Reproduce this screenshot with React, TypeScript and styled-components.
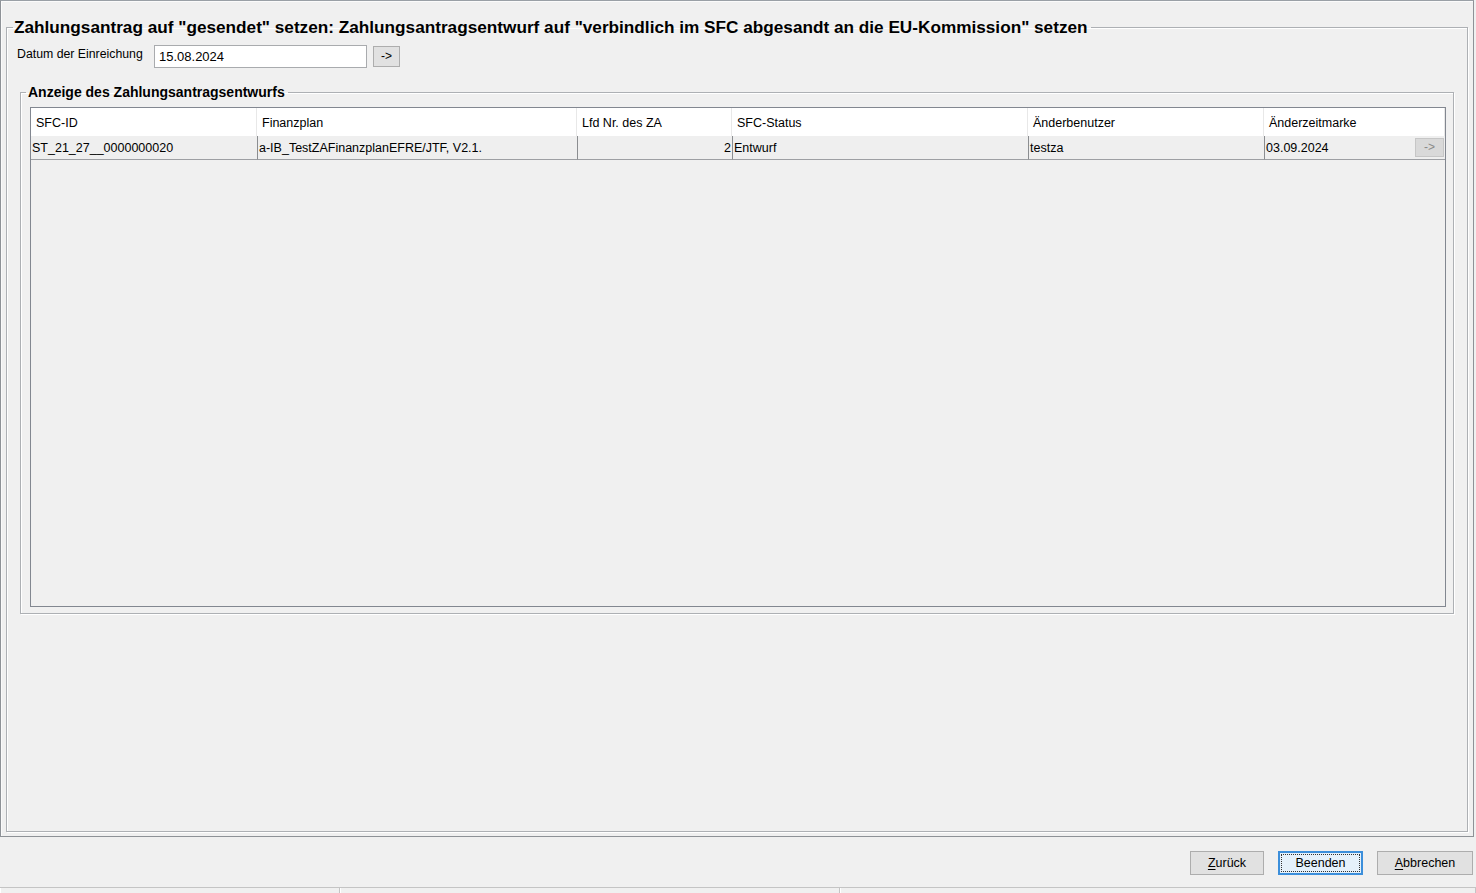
import styled, { createGlobalStyle } from 'styled-components'

const GlobalStyle = createGlobalStyle`
  html, body {
    margin: 0;
    padding: 0;
    background: #f0f0f0;
  }
  body {
    font-family: "Liberation Sans", Arial, sans-serif;
    font-size: 12px;
    color: #000;
  }
`

const columns = [
    { title: 'SFC-ID', value: 'ST_21_27__0000000020' },
    { title: 'Finanzplan', value: 'a-IB_TestZAFinanzplanEFRE/JTF, V2.1.' },
    { title: 'Lfd Nr. des ZA', value: '2', right: true },
    { title: 'SFC-Status', value: 'Entwurf' },
    { title: 'Änderbenutzer', value: 'testza' },
    { title: 'Änderzeitmarke', value: '03.09.2024', button: true },
]

const App = () => {
    return (
        <Window>
            <GlobalStyle />
            <MainPanel>
                <OuterSet>
                    <OuterLegend>
                        Zahlungsantrag auf "gesendet" setzen: Zahlungsantragsentwurf auf "verbindlich im SFC abgesandt an die EU-Kommission" setzen
                    </OuterLegend>
                    <DateRow>
                        <DateLabel>Datum der Einreichung</DateLabel>
                        <DateInput>15.08.2024</DateInput>
                        <SmallButton>-&gt;</SmallButton>
                    </DateRow>
                    <InnerSet>
                        <InnerLegend>Anzeige des Zahlungsantragsentwurfs</InnerLegend>
                        <Table>
                            {columns.map((c) => (
                                <HeadCell key={c.title}>{c.title}</HeadCell>
                            ))}
                            {columns.map((c, i) => (
                                <DataCell key={c.title} $first={i === 0} $right={!!c.right}>
                                    <span>{c.value}</span>
                                    {c.button && <RowButton>-&gt;</RowButton>}
                                </DataCell>
                            ))}
                        </Table>
                    </InnerSet>
                </OuterSet>
            </MainPanel>
            <Footer>
                <DialogButton $width={74}><u>Z</u>urück</DialogButton>
                <DialogButton $width={85} $focused>Beenden</DialogButton>
                <DialogButton $width={96}><u>A</u>bbrechen</DialogButton>
            </Footer>
            <StatusBar>
                <StatusField $width={340} />
                <StatusField $width={500} />
                <StatusField $width={636} />
            </StatusBar>
        </Window>
    )
}

export default App

const Window = styled.div`
display: flex;
flex-direction: column;
width: 1476px;
height: 893px;
overflow: hidden;
`

const MainPanel = styled.div`
box-sizing: border-box;
width: 1474px;
height: 837px;
padding: 0 5px 4px 5px;
border: 1px solid #8e9297;
border-top-color: #9aa0a6;
box-shadow: inset 1px 1px 0 #fbfbfb;
display: flex;
flex-direction: column;
`

const OuterSet = styled.fieldset`
box-sizing: border-box;
margin: 16px 0 0 0;
padding: 8px 13px 0 0;
flex: 1;
min-width: 0;
border: 1px solid #adb0b4;
box-shadow: inset 1px 1px 0 #fff, 1px 1px 0 #fff;
display: flex;
flex-direction: column;
`

const OuterLegend = styled.legend`
margin-left: 6px;
padding: 0 3px 0 1px;
font-size: 17.2px;
line-height: 20px;
font-weight: 700;
color: #000;
`

const DateRow = styled.div`
display: flex;
align-items: flex-start;
height: 23px;
margin-left: 10px;
`

const DateLabel = styled.span`
width: 137px;
font-size: 12.3px;
line-height: 15px;
margin-top: 2px;
`

const DateInput = styled.div`
box-sizing: border-box;
width: 213px;
height: 23px;
background: #fff;
border: 1px solid #a9abae;
padding: 0 4px;
line-height: 22px;
font-size: 13px;
`

const SmallButton = styled.div`
box-sizing: border-box;
margin: 1px 0 0 6px;
width: 27px;
height: 21px;
background: #e1e1e1;
border: 1px solid #adadad;
text-align: center;
line-height: 18px;
font-size: 12px;
`

const InnerSet = styled.fieldset`
box-sizing: border-box;
margin: 16px 0 0 13px;
padding: 7px 7px 6px 9px;
height: 530px;
min-width: 0;
border: 1px solid #adb0b4;
box-shadow: inset 1px 1px 0 #fff, 1px 1px 0 #fff;
`

const InnerLegend = styled.legend`
margin-left: -4px;
padding: 0 3px 0 2px;
font-size: 14px;
line-height: 16px;
font-weight: 700;
`

const Table = styled.div`
box-sizing: border-box;
height: 500px;
border: 1px solid #828790;
display: grid;
grid-template-columns: 226px 320px 155px 296px 236px 1fr;
grid-template-rows: 28px 24px;
align-content: start;
background: #f0f0f0;
font-size: 12.5px;
`

const HeadCell = styled.div`
background: #fff;
border-right: 1px solid #e8e8e8;
padding: 0 5px;
line-height: 30px;
white-space: nowrap;
&:last-of-type {
  border-right: none;
}
`

const DataCell = styled.div<{ $first: boolean; $right: boolean }>`
position: relative;
background: #efefef;
border-left: ${(p) => (p.$first ? 'none' : '1px solid #8b8d90')};
border-bottom: 1px solid #9d9fa3;
padding: 0 1px;
line-height: 24px;
white-space: nowrap;
text-align: ${(p) => (p.$right ? 'right' : 'left')};
`

const RowButton = styled.div`
position: absolute;
right: 1px;
top: 2px;
box-sizing: border-box;
width: 29px;
height: 19px;
background: #d9d9d9;
border: 1px solid #c6c6c6;
color: #8a8a8a;
text-align: center;
line-height: 16px;
font-size: 12px;
`

const Footer = styled.div`
flex: 1;
display: flex;
justify-content: flex-end;
align-items: flex-start;
gap: 14px;
padding: 14px 3px 0 0;
`

const DialogButton = styled.div<{ $focused?: boolean; $width: number }>`
box-sizing: border-box;
height: 24px;
width: ${(p) => p.$width}px;
background: ${(p) => (p.$focused ? '#e5f1fb' : '#e1e1e1')};
border: ${(p) => (p.$focused ? '2px solid #3c8fdb' : '1px solid #adadad')};
outline: ${(p) => (p.$focused ? '1px dotted #333' : 'none')};
outline-offset: -4px;
text-align: center;
line-height: ${(p) => (p.$focused ? '20px' : '22px')};
font-size: 12.5px;
white-space: nowrap;
u {
  text-underline-offset: 2px;
}
`

const StatusBar = styled.div`
display: flex;
height: 5px;
border-top: 1px solid #c4c4c4;
`

const StatusField = styled.div<{ $width: number }>`
width: ${(p) => p.$width}px;
border-right: 1px solid #c4c4c4;
box-shadow: inset 1px 0 0 #fff;
`
